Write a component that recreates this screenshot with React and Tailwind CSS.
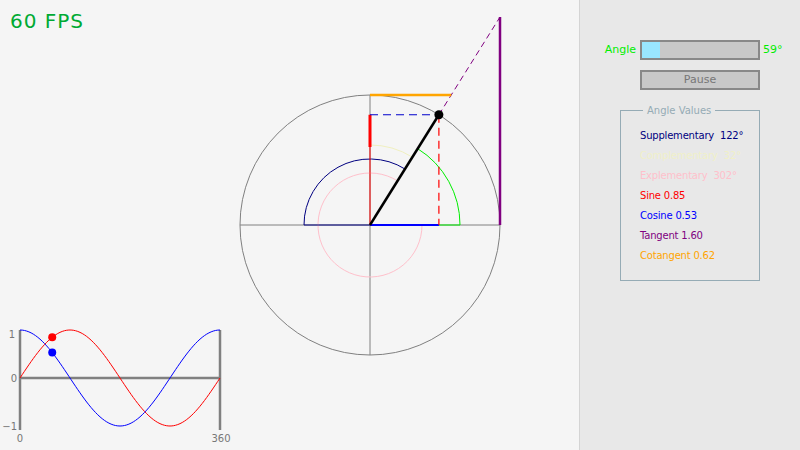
import React from 'react'

const DEG = Math.PI / 180
const angle = 58
const cx = 370
const cy = 225
const R = 130

// point on circle of radius r at angle a (degrees), y up
const pt = (r, a) => [cx + r * Math.cos(a * DEG), cy - r * Math.sin(a * DEG)]

function arcPath(r, a0, a1) {
  const [x0, y0] = pt(r, a0)
  const [x1, y1] = pt(r, a1)
  const large = a1 - a0 > 180 ? 1 : 0
  return `M${x0} ${y0} A${r} ${r} 0 ${large} 0 ${x1} ${y1}`
}

function wave(fn) {
  const pts = []
  for (let i = 0; i <= 360; i += 4) {
    pts.push(`${20 + (i / 360) * 200},${378 - 48 * fn(i * DEG)}`)
  }
  return pts.join(' ')
}

function Scene() {
  const [px, py] = pt(R, angle)
  const tan = 1.6
  const cot = 0.625
  const tanY = cy - R * tan
  const cotX = cx + R * cot
  const [s0x, s0y] = pt(66, angle)
  const [g0x, g0y] = pt(90, angle)

  return (
    <svg width="579" height="450" viewBox="0 0 579 450" className="block">
      {/* unit circle and axes */}
      <circle cx={cx} cy={cy} r={R} fill="none" stroke="#808080" strokeWidth="1" />
      <line x1={cx - R} y1={cy} x2={cx + R} y2={cy} stroke="#808080" />
      <line x1={cx} y1={cy - R} x2={cx} y2={cy + R} stroke="#808080" />

      {/* explementary */}
      <path d={arcPath(52, angle, 360)} fill="none" stroke="#ffc0cb" />
      {/* supplementary */}
      <path d={`M${cx} ${cy} L${s0x} ${s0y} ${arcPath(66, angle, 180).replace('M', 'L')} L${cx} ${cy}`} fill="none" stroke="#000080" />
      {/* complementary */}
      <path d={arcPath(80, angle, 90)} fill="none" stroke="#f0f0c0" />
      {/* angle arc */}
      <path d={`M${cx} ${cy} L${cx + 90} ${cy} A90 90 0 0 0 ${g0x} ${g0y} L${cx} ${cy}`} fill="none" stroke="#00ee00" />

      {/* cosine */}
      <line x1={cx} y1={cy} x2={px} y2={cy} stroke="#0000ff" strokeWidth="2" />
      {/* sine */}
      <line x1={cx} y1={cy} x2={cx} y2={147} stroke="#ff0000" strokeWidth="1" />
      <line x1={cx} y1={147} x2={cx} y2={py} stroke="#ff0000" strokeWidth="3" />
      <line x1={px} y1={py} x2={px} y2={cy} stroke="#ff0000" strokeWidth="1.2" strokeDasharray="8 5" />
      <line x1={cx} y1={py} x2={px} y2={py} stroke="#0000cc" strokeWidth="1.2" strokeDasharray="8 5" />

      {/* tangent */}
      <line x1={cx + R} y1={cy} x2={cx + R} y2={tanY} stroke="#800080" strokeWidth="2.5" />
      <line x1={px} y1={py} x2={cx + R} y2={tanY} stroke="#800080" strokeWidth="1" strokeDasharray="6 4" />
      {/* cotangent */}
      <line x1={cx} y1={cy - R} x2={cotX} y2={cy - R} stroke="#ffa500" strokeWidth="2.5" />

      {/* radius */}
      <line x1={cx} y1={cy} x2={px} y2={py} stroke="#000000" strokeWidth="2.5" />
      <circle cx={px} cy={py} r="4.5" fill="#000000" />

      {/* small graph */}
      <line x1="20" y1="330" x2="20" y2="430" stroke="#808080" strokeWidth="2.5" />
      <line x1="220" y1="330" x2="220" y2="430" stroke="#808080" strokeWidth="2.5" />
      <line x1="20" y1="378" x2="220" y2="378" stroke="#808080" strokeWidth="2.5" />
      <polyline points={wave(Math.sin)} fill="none" stroke="#ff0000" strokeWidth="1" />
      <polyline points={wave(Math.cos)} fill="none" stroke="#0000ff" strokeWidth="1" />
      <circle cx={20 + (angle / 360) * 200} cy={378 - 48 * Math.sin(angle * DEG)} r="4" fill="#ff0000" />
      <circle cx={20 + (angle / 360) * 200} cy={378 - 48 * Math.cos(angle * DEG)} r="4" fill="#0000ff" />
      <g fill="#777777" fontSize="10" fontFamily="'DejaVu Sans', sans-serif">
        <text x="15" y="338" textAnchor="end">1</text>
        <text x="17" y="382" textAnchor="end">0</text>
        <text x="17" y="430" textAnchor="end">−1</text>
        <text x="20" y="442" textAnchor="middle">0</text>
        <text x="221" y="442" textAnchor="middle">360</text>
      </g>
    </svg>
  )
}

const values = [
  { label: 'Supplementary', value: '122°', color: 'text-[#000080]' },
  { label: 'Complementary', value: '32°', color: 'text-[#f0f0c8]' },
  { label: 'Explementary', value: '302°', color: 'text-[#ffc0cb]' },
  { label: 'Sine', value: '0.85', color: 'text-[#ff0000]' },
  { label: 'Cosine', value: '0.53', color: 'text-[#0000ff]' },
  { label: 'Tangent', value: '1.60', color: 'text-[#800080]' },
  { label: 'Cotangent', value: '0.62', color: 'text-[#ffa500]' },
]

export default function App() {
  return (
    <div className="flex w-[800px] h-[450px] overflow-hidden font-['DejaVu_Sans',sans-serif]">
      <div className="relative w-[579px] h-full bg-[#f5f5f5]">
        <Scene />
        <div className="absolute left-[10px] top-[6px] text-[20px] tracking-[1px] text-[#00aa33]">60 FPS</div>
      </div>

      <div className="flex-1 h-full bg-[#e8e8e8] border-l border-[#d4d4d4] pt-[40px]">
        <div className="flex items-center h-[20px]">
          <span className="w-[60px] text-right pr-[4px] text-[11px] text-[#00ee00]">Angle</span>
          <div className="w-[120px] h-[20px] bg-[#c8c8c8] border-2 border-[#888888]">
            <div className="w-[18px] h-full bg-[#99e6ff]" />
          </div>
          <span className="pl-[3px] text-[11px] text-[#00ee00]">59°</span>
        </div>

        <div className="ml-[60px] mt-[10px] w-[120px] h-[20px] bg-[#c8c8c8] border-2 border-[#888888] flex items-center justify-center text-[11px] text-[#777777]">
          Pause
        </div>

        <fieldset className="ml-[40px] mt-[13px] w-[140px] min-w-0 h-[178px] border border-[#95abb5] pl-[19px] pr-0 pt-[11px]">
          <legend className="ml-[3px] px-[4px] text-[10px] text-[#95abb5]">Angle Values</legend>
          <div className="flex flex-col gap-[6px]">
            {values.map((v) => (
              <div key={v.label} className={`text-[10px] tracking-[-0.2px] leading-[14px] whitespace-nowrap ${v.color}`}>
                {v.label}
                {v.label.endsWith('ary') ? '\u00a0\u00a0' : ' '}
                {v.value}
              </div>
            ))}
          </div>
        </fieldset>
      </div>
    </div>
  )
}
